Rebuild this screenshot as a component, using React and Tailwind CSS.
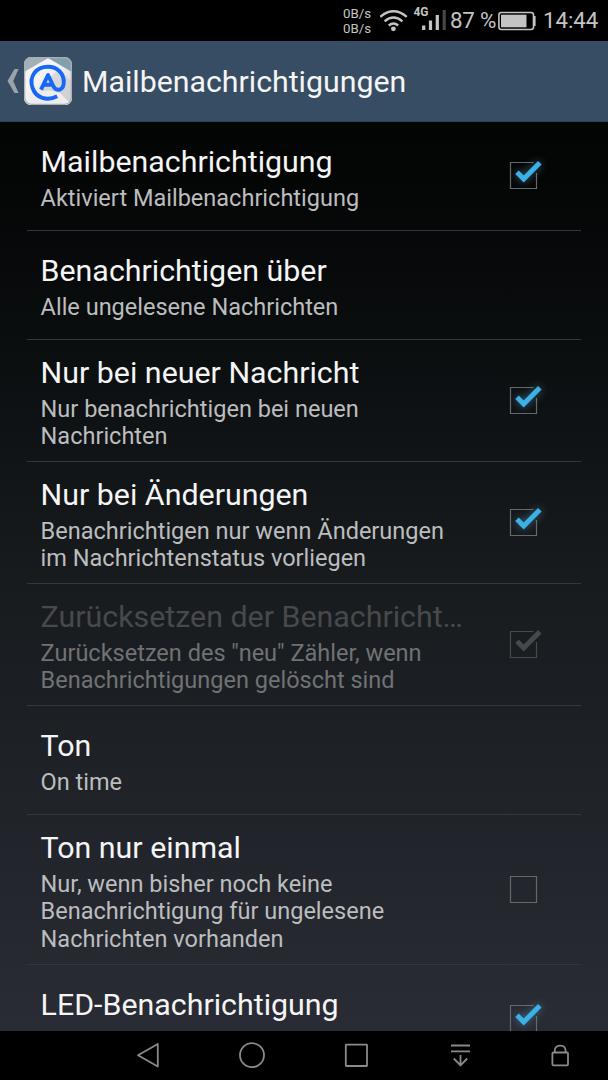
const rows = [
  { title: "Mailbenachrichtigung", lines: ["Aktiviert Mailbenachrichtigung"], check: "on", height: "h-[109px]" },
  { title: "Benachrichtigen über", lines: ["Alle ungelesene Nachrichten"], height: "h-[109px]" },
  { title: "Nur bei neuer Nachricht", lines: ["Nur benachrichtigen bei neuen", "Nachrichten"], check: "on", height: "h-[122px]" },
  { title: "Nur bei Änderungen", lines: ["Benachrichtigen nur wenn Änderungen", "im Nachrichtenstatus vorliegen"], check: "on", height: "h-[122px]" },
  { title: "Zurücksetzen der Benachricht…", lines: ['Zurücksetzen des "neu" Zähler, wenn', "Benachrichtigungen gelöscht sind"], check: "disabled", height: "h-[122px]" },
  { title: "Ton", lines: ["On time"], height: "h-[109px]" },
  { title: "Ton nur einmal", lines: ["Nur, wenn bisher noch keine", "Benachrichtigung für ungelesene", "Nachrichten vorhanden"], check: "off", height: "h-[150px]" },
  { title: "LED-Benachrichtigung", lines: [], check: "on", height: "h-[109px]" },
];

function CheckBox({ state }) {
  const disabled = state === "disabled";
  const checked = state !== "off";
  const border = disabled ? "#47494b" : "#66686a";
  return (
    <svg width="54" height="54" viewBox="0 0 54 54" className="shrink-0">
      <path
        d={checked ? "M36.5 13.5H13.5V39.5H39.5V24" : "M13.5 13.5H39.5V39.5H13.5Z"}
        fill="none"
        stroke={border}
        strokeWidth="1.2"
      />
      {checked && (
        <path
          d="M20 23.2L26.7 29.9L42.8 13.8"
          fill="none"
          stroke={disabled ? "#46484b" : "#3bb2e5"}
          strokeWidth="5"
          className={disabled ? "" : "drop-shadow-[0_0_4px_rgba(90,150,190,0.65)]"}
        />
      )}
    </svg>
  );
}

function Row({ title, lines, check, height }) {
  const off = check === "disabled";
  return (
    <div className={`flex shrink-0 items-center border-b border-[#33373b] pl-[13.6px] pr-[30px] ${height}`}>
      <div className="min-w-0 flex-1 whitespace-nowrap pt-[4px]">
        <div className={`text-[30.36px] leading-[36px] ${off ? "text-[#47494c]" : "text-[#f5f5f5]"}`}>{title}</div>
        <div className={`mt-[5px] min-h-[27.5px] text-[23.53px] leading-[27.5px] ${off ? "text-[#707274]" : "text-[#bcbdbe]"}`}>
          {lines.map((line) => (
            <div key={line}>{line}</div>
          ))}
        </div>
      </div>
      {check && <CheckBox state={check} />}
    </div>
  );
}

function StatusBar() {
  return (
    <div className="flex h-[41px] shrink-0 items-center bg-black pl-[343px] text-[#c4c4c4]">
      <div className="w-[37px] shrink-0 text-[13.3px] leading-[15px]">
        <div>0B/s</div>
        <div>0B/s</div>
      </div>
      <svg width="70" height="41" viewBox="380 0 70 41" className="shrink-0" fill="none" stroke="#c4c4c4">
        <path d="M380.2 16.8Q393.5 5.6 406.8 16.8M384.6 21.4Q393.5 13.8 402.4 21.4M388.8 25.5Q393.5 21.5 398.2 25.5" strokeWidth="2.4" />
        <circle cx="393.4" cy="28.8" r="2.4" fill="#c4c4c4" stroke="none" />
        <text x="413.4" y="15.5" fontSize="12" fontWeight="700" fill="#c4c4c4" stroke="none">4G</text>
        <path d="M423.7 25.5V30M430.5 20.5V30M437.3 15V30" strokeWidth="3.2" />
        <path d="M444.2 10V30" stroke="#44464b" strokeWidth="3.2" />
      </svg>
      <span className="w-[47px] shrink-0 whitespace-nowrap pt-px text-[22.4px] tracking-[-0.25px]">87 %</span>
      <svg width="46" height="41" viewBox="497 0 46 41" className="shrink-0" fill="none">
        <rect x="498.9" y="12.5" width="34.6" height="17" rx="2.5" stroke="#c4c4c4" strokeWidth="1.6" />
        <rect x="501" y="14.7" width="25.5" height="12.6" fill="#c4c4c4" />
        <path d="M534.5 16V26" stroke="#c4c4c4" strokeWidth="2.2" />
      </svg>
      <span className="pt-px text-[22.2px]">14:44</span>
    </div>
  );
}

function MailLogo() {
  return (
    <svg width="48" height="48" viewBox="0 0 48 48" className="ml-[3px] shrink-0">
      <defs>
        <clipPath id="tile"><rect width="48" height="48" rx="7" /></clipPath>
        <linearGradient id="paper" x1="0" y1="0" x2="1" y2="1">
          <stop offset="0.35" stopColor="#f5f5f5" />
          <stop offset="1" stopColor="#cfd1d3" />
        </linearGradient>
      </defs>
      <g clipPath="url(#tile)">
        <rect width="48" height="48" fill="#83a0ae" />
        <path d="M0 0H24L0 16Z" fill="#a3b0b6" />
        <path d="M0 15L24 1L48 15V48H0Z" fill="url(#paper)" />
        <path d="M35 12L48 25V48H32L15 31Z" fill="#c9cbcd" opacity=".6" />
        <path d="M0 48L12 36Q24 31 36 36L48 48Z" fill="#ededee" />
      </g>
      <path d="M33.2 39.3C23 44.5 12 41 8.6 31C4.5 19 12.5 9.8 24 9.8C34 9.8 39.8 17 39.8 25C39.8 33 34 34 31 31.5L29.8 30L24 18L17 32.6M20.5 27.8H28.5" fill="none" stroke="#1768f5" strokeWidth="3.9" strokeLinejoin="round" />
      <rect x=".7" y=".7" width="46.6" height="46.6" rx="6.5" fill="none" stroke="#a9afb4" strokeWidth="1.2" />
    </svg>
  );
}

function NavBar() {
  return (
    <div className="h-[49px] shrink-0 bg-black">
      <svg width="608" height="49" viewBox="0 1031 608 49" fill="none" stroke="#8a8a8c" strokeWidth="1.8" strokeLinejoin="round">
        <path d="M157.8 1044V1066.5L138 1055.2Z" />
        <circle cx="252" cy="1055.2" r="12" />
        <rect x="345.8" y="1044.7" width="21.2" height="21.3" rx=".5" />
        <path d="M451 1045.5H470M451 1051.4H470M460.5 1055V1065M453.8 1058.5L460.5 1065.3L467.2 1058.5" />
        <rect x="552.4" y="1052.5" width="15.6" height="12.8" rx="1" />
        <path d="M554.8 1052V1050.5C554.8 1043.9 565.6 1043.9 565.6 1050.5V1052" />
      </svg>
    </div>
  );
}

export default function App() {
  return (
    <div className="flex h-[1080px] w-[608px] flex-col overflow-hidden bg-black font-[Roboto,sans-serif]">
      <StatusBar />
      <header className="flex h-[81px] shrink-0 items-center border-b border-[#2c4053] bg-[#374d63] pl-[7px] text-[30.3px] text-[#f5f5f5]">
        <svg width="14" height="26" viewBox="0 0 14 26" className="shrink-0">
          <path d="M7.5 1H11.6L6.2 13L11.6 25H7.5L.5 13Z" fill="#9aa2aa" />
        </svg>
        <MailLogo />
        <span className="ml-[10px] pt-[2px]">Mailbenachrichtigungen</span>
      </header>
      <main className="flex min-h-0 flex-1 flex-col overflow-hidden bg-linear-to-b from-[#030404] via-[#171b1e] to-[#292c34] px-[27px]">
        {rows.map((row) => (
          <Row key={row.title} {...row} />
        ))}
      </main>
      <NavBar />
    </div>
  );
}
